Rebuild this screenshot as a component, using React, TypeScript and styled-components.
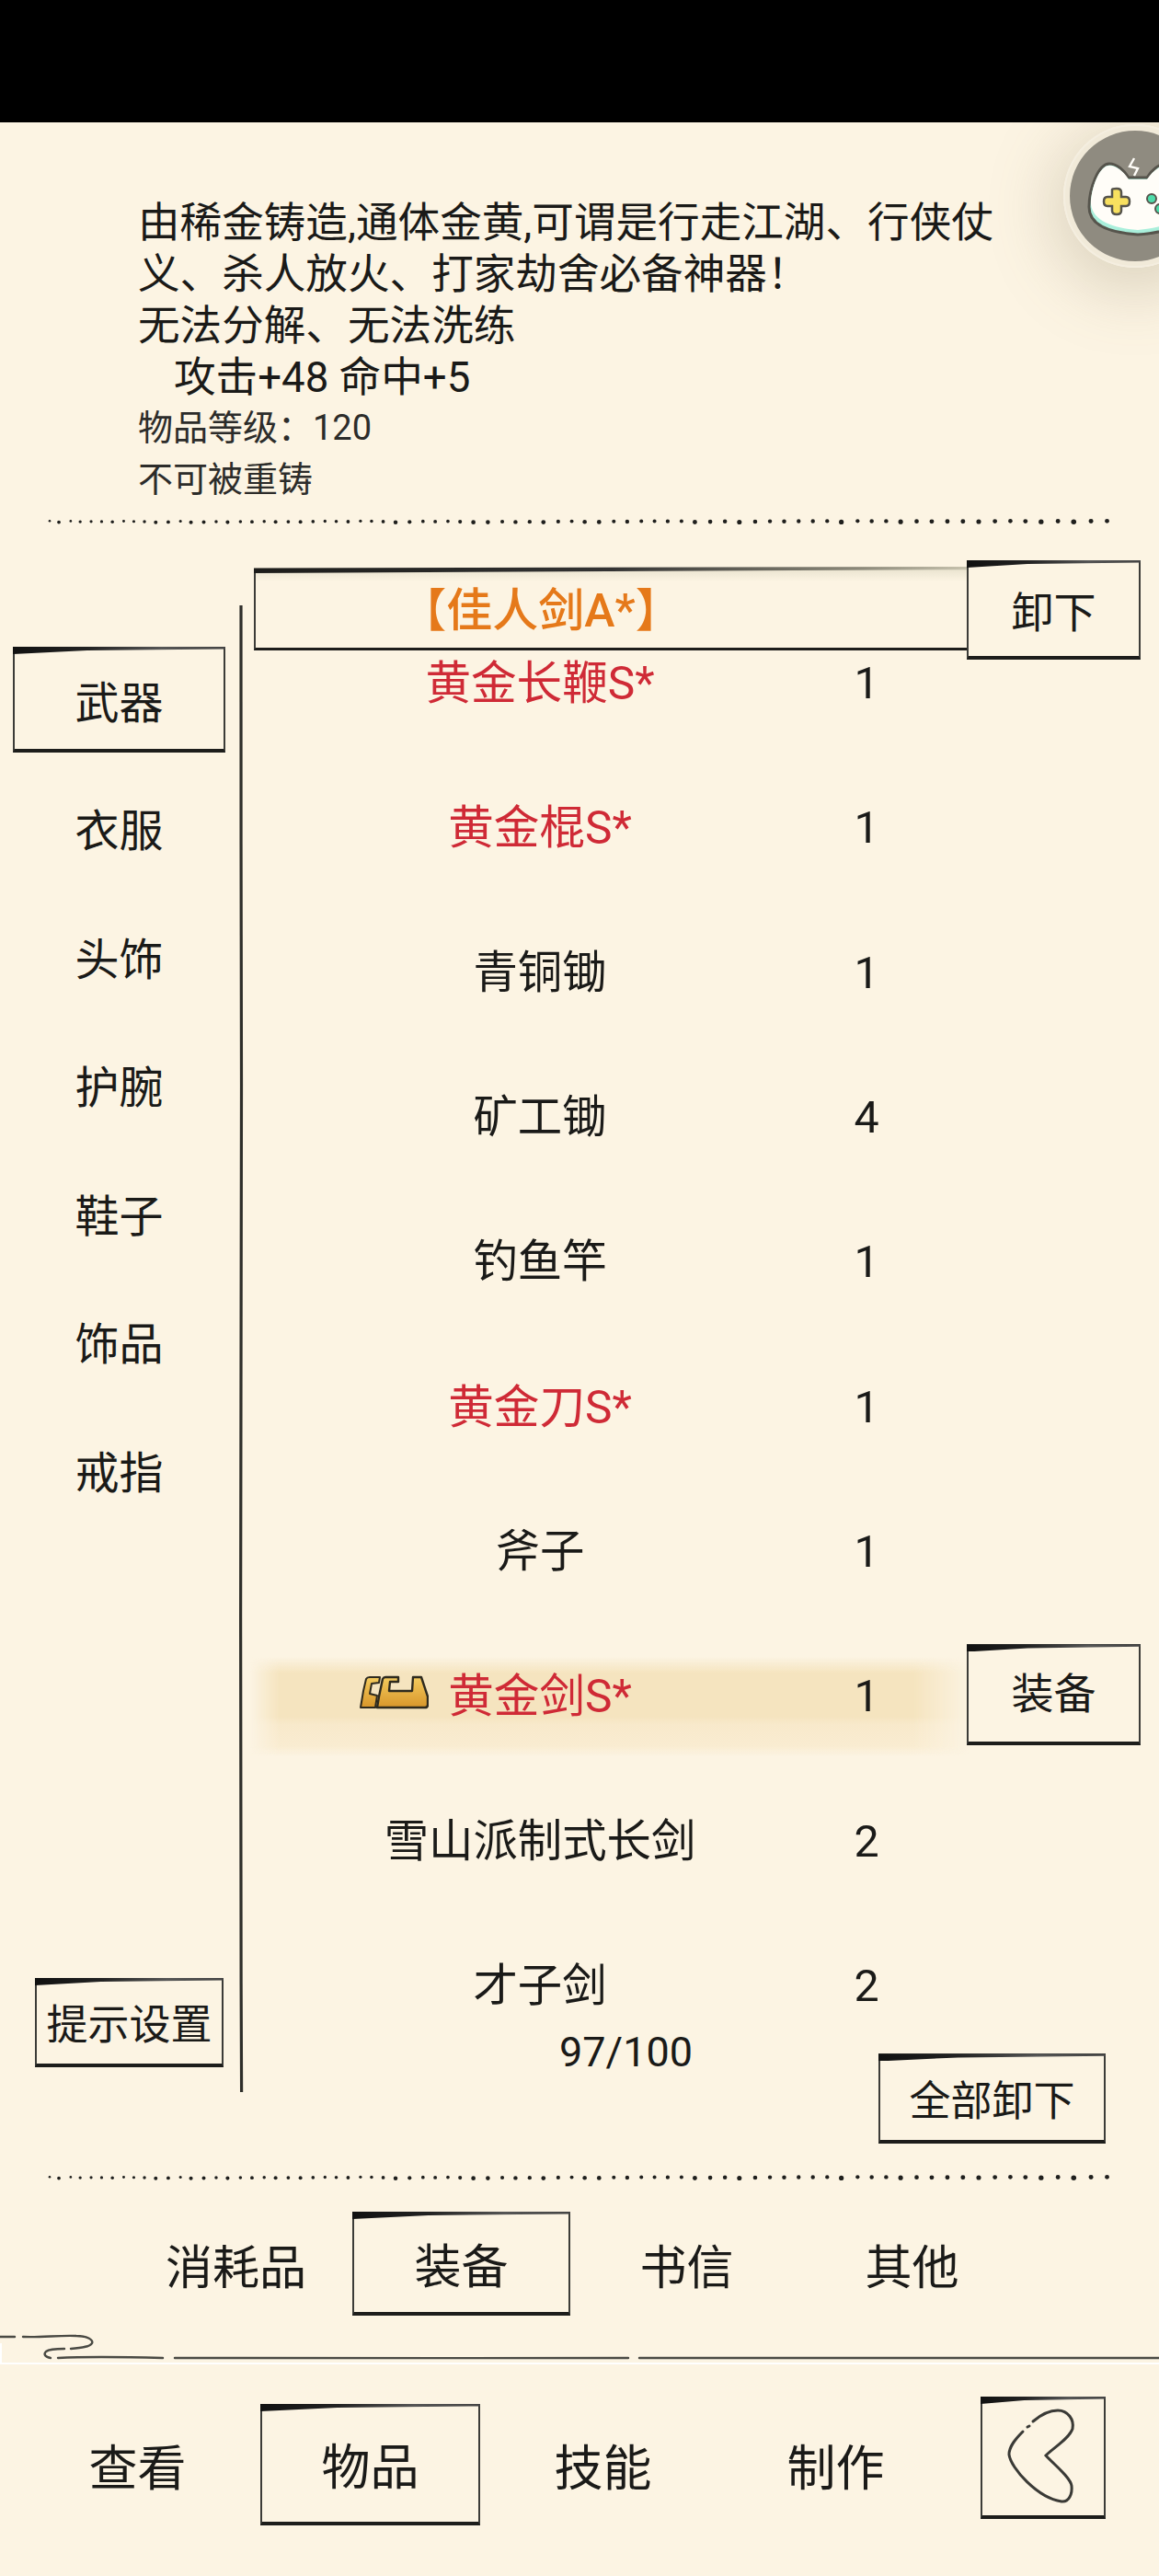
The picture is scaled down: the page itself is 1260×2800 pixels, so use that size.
import React from "react";
import styled, { createGlobalStyle } from "styled-components";

const PAPER = "#fcf4e3";
const INK = "#1a1a18";

const GlobalStyle = createGlobalStyle`
  html, body {
    margin: 0;
    padding: 0;
    background: ${PAPER};
  }
  * {
    box-sizing: border-box;
  }
`;

const Page = styled.div`
  position: relative;
  width: 1260px;
  height: 2800px;
  overflow: hidden;
  background: ${PAPER};
  color: ${INK};
  font-family: Roboto, "Noto Sans CJK SC", sans-serif;
`;

const StatusBar = styled.div`
  position: relative;
  z-index: 3;
  height: 133px;
  background: #000;
`;

const Description = styled.div`
  padding: 82px 0 0 150px;
  height: 415px;
`;

const DescLine = styled.div<{ $indent?: boolean }>`
  font-size: 45.6px;
  line-height: 56px;
  padding-left: ${(p) => (p.$indent ? "39px" : "0")};
  white-space: nowrap;
`;

const DescNote = styled.div`
  position: relative;
  top: -2px;
  font-size: 38px;
  line-height: 56px;
  color: #2c2c2a;
  white-space: nowrap;
`;

const DotRow = styled.svg<{ $top: number; $bottom: number }>`
  display: block;
  width: 1156px;
  height: 10px;
  margin: ${(p) => p.$top}px 0 ${(p) => p.$bottom}px 52px;
`;

const Main = styled.div`
  display: flex;
  height: 1740px;
`;

const Sidebar = styled.div`
  display: flex;
  flex-direction: column;
  gap: 24.6px;
  width: 259px;
  padding: 103px 0 93px 14px;
`;

const SketchBox = styled.div`
  position: relative;
  display: flex;
  align-items: center;
  justify-content: center;
  border-style: solid;
  border-color: #3c3c38;
  border-width: 2px 2px 4px 2px;
  border-bottom-color: #1d1d1b;
  white-space: nowrap;

  &::before {
    content: "";
    position: absolute;
    top: -2px;
    left: -2px;
    right: -2px;
    height: 8px;
    background: linear-gradient(90deg, #111 0%, #222 35%, #555 70%, #444 100%);
    clip-path: polygon(0 0, 100% 0, 100% 30%, 35% 50%, 0 100%);
  }
`;

const SideItem = styled.div`
  display: flex;
  align-items: center;
  justify-content: center;
  width: 231px;
  height: 115px;
  padding-bottom: 2px;
  font-size: 48px;
  flex: none;
`;

const SideActive = styled(SketchBox)`
  width: 231px;
  height: 115px;
  font-size: 48px;
  flex: none;
`;

const HintButton = styled(SketchBox)`
  width: 205px;
  height: 97px;
  margin: auto 0 0 24px;
  font-size: 45px;
  flex: none;
`;

const HandLine = styled.svg`
  flex: none;
  width: 6px;
  height: 1616px;
  margin: 58px 11px 0 0;
`;

const ListColumn = styled.div`
  width: 964px;
`;

const EquippedRow = styled.div`
  display: flex;
  align-items: flex-start;
  height: 110px;
`;

const EquippedBox = styled.div`
  position: relative;
  z-index: 1;
  width: 777px;
  height: 89px;
  margin-top: 18px;
  border-left: 2px solid #3c3c38;
  border-bottom: 3px solid #1d1d1b;
  background: linear-gradient(180deg, #e9e3cf 0, ${PAPER} 14px);

  &::before {
    content: "";
    position: absolute;
    top: -2px;
    left: -2px;
    right: 0;
    height: 7px;
    background: linear-gradient(90deg, #1c1c1a 0%, #333 50%, #8c897a 85%, #c8c3ae 100%);
    clip-path: polygon(0 20%, 100% 0, 100% 45%, 0 100%);
  }
`;

const EquippedName = styled.div`
  width: 620px;
  text-align: center;
  color: #e5791a;
  font-size: 50px;
  font-weight: 500;
  line-height: 92px;
  white-space: nowrap;
`;

const SmallAction = styled(SketchBox)`
  position: relative;
  z-index: 2;
  width: 189px;
  height: 108px;
  margin: 9px 0 0 -1px;
  background: ${PAPER};
  font-size: 46px;
  flex: none;
`;

const Row = styled.div<{ $selected?: boolean }>`
  position: relative;
  display: grid;
  grid-template-columns: 622px 88px 1fr;
  height: 157.35px;
  font-size: 48.4px;
  line-height: 66px;
  text-align: center;

  ${(p) =>
    p.$selected &&
    `
    &::before {
      content: "";
      position: absolute;
      top: -10px;
      left: -4px;
      width: 784px;
      height: 108px;
      background: linear-gradient(180deg, rgba(245,229,193,0) 0, #f5e4bf 16%, #f5e4bf 60%, #f8e9cb 68%, #f9ecd1 90%, rgba(250,238,214,0) 100%);
      -webkit-mask-image: linear-gradient(90deg, transparent 0, #000 4%, #000 92%, transparent 100%);
      mask-image: linear-gradient(90deg, transparent 0, #000 4%, #000 92%, transparent 100%);
    }
  `}
`;

const NameCell = styled.div`
  position: relative;
  white-space: nowrap;
`;

const ItemName = styled.span<{ $tone?: "red" | "plain" }>`
  position: relative;
  color: ${(p) => (p.$tone === "red" ? "#cf2a36" : INK)};
  font-size: ${(p) => (p.$tone === "red" ? "49.6px" : "inherit")};
`;

const LockIcon = styled.svg`
  position: absolute;
  left: -96px;
  top: 6px;
  width: 75px;
  height: 37px;
`;

const CountCell = styled.div`
  position: relative;
`;

const RowAction = styled(SketchBox)`
  justify-self: end;
  width: 189px;
  height: 110px;
  margin-top: -24px;
  background: ${PAPER};
  font-size: 46px;
`;

const ListFooter = styled.div`
  display: grid;
  grid-template-columns: 1fr auto;
  align-items: start;
  margin-top: -92px;
`;

const Capacity = styled.div`
  padding: 13px 0 0 130px;
  font-size: 45px;
  line-height: 54px;
  text-align: center;
`;

const ClearButton = styled(SketchBox)`
  width: 247px;
  height: 98px;
  margin: 41px 38px 0 0;
  font-size: 45px;
`;

const SubTabs = styled.div`
  display: grid;
  grid-template-columns: repeat(4, 245px);
  justify-items: center;
  align-items: center;
  height: 113px;
  margin-top: 32px;
  padding-left: 134px;
`;

const SubTab = styled.div`
  font-size: 51px;
`;

const SubTabActive = styled(SketchBox)`
  width: 237px;
  height: 113px;
  font-size: 51px;
`;

const CurlLine = styled.svg`
  display: block;
  width: 1260px;
  height: 35px;
  margin-top: 18px;
`;

const BottomTabs = styled.div`
  display: grid;
  grid-template-columns: repeat(4, 253px) 136px;
  justify-items: center;
  align-items: center;
  height: 132px;
  margin-top: 43px;
  padding-left: 23px;
`;

const BottomTab = styled.div`
  font-size: 53px;
`;

const BottomTabActive = styled(SketchBox)`
  width: 239px;
  height: 132px;
  font-size: 53px;
`;

const BackButton = styled(SketchBox)`
  align-self: start;
  justify-self: start;
  width: 136px;
  height: 133px;
  margin: -8px 0 0 31px;
`;

const FloatBall = styled.svg`
  position: absolute;
  z-index: 2;
  top: 133px;
  left: 1156px;
  width: 160px;
  height: 160px;
`;

const BallGlow = styled.div`
  position: absolute;
  z-index: 1;
  top: 135px;
  left: 1156px;
  width: 156px;
  height: 156px;
  border-radius: 50%;
  box-shadow: 0 14px 70px 12px rgba(130, 120, 90, 0.26);
`;

type Item = { name: string; count: number; rare?: boolean; selected?: boolean };

const ITEMS: Item[] = [
  { name: "黄金长鞭S*", count: 1, rare: true },
  { name: "黄金棍S*", count: 1, rare: true },
  { name: "青铜锄", count: 1 },
  { name: "矿工锄", count: 4 },
  { name: "钓鱼竿", count: 1 },
  { name: "黄金刀S*", count: 1, rare: true },
  { name: "斧子", count: 1 },
  { name: "黄金剑S*", count: 1, rare: true, selected: true },
  { name: "雪山派制式长剑", count: 2 },
  { name: "才子剑", count: 2 },
];

const SIDE_ITEMS = ["衣服", "头饰", "护腕", "鞋子", "饰品", "戒指"];

// hand-drawn dots: small and close on the left, heavier on the right
const DOTS = (() => {
  const out: { x: number; y: number; r: number }[] = [];
  let x = 2;
  let i = 0;
  while (x < 1154) {
    const t = x / 1156;
    const wobble = Math.sin(i * 12.9898) * 43758.5453;
    const rnd = wobble - Math.floor(wobble);
    out.push({ x, y: 5 + (rnd - 0.5) * 1.4, r: 1.3 + t * 1.1 + rnd * 0.6 });
    x += 10 + t * 7 + rnd * 3;
    i += 1;
  }
  return out;
})();

function DottedDivider({ top, bottom }: { top: number; bottom: number }) {
  return (
    <DotRow $top={top} $bottom={bottom} viewBox="0 0 1156 10">
      {DOTS.map((d) => (
        <circle key={d.x} cx={d.x} cy={d.y} r={d.r} fill="#1f1f1d" />
      ))}
    </DotRow>
  );
}

function GoldLock() {
  return (
    <LockIcon viewBox="0 0 75 37">
      <defs>
        <linearGradient id="gold" x1="0" y1="0" x2="0" y2="1">
          <stop offset="0" stopColor="#f4cb5e" />
          <stop offset="1" stopColor="#d8962a" />
        </linearGradient>
      </defs>
      <path
        d="M1 35 L4 17 L7 4 Q8 2 11 2 L22 2 L21 8 L13 9 L11 20 L19 22 L17 35 Z"
        fill="url(#gold)"
        stroke="#2e2a1e"
        strokeWidth="2"
        strokeLinejoin="round"
      />
      <path
        d="M19 35 L21 23 L25 4 Q26 2 28 2 L42 2 L42 7 L33 7 L32 17 L57 17 L58 2 L67 2 L74 23 L74 32 Q74 35 71 35 Z"
        fill="url(#gold)"
        stroke="#2e2a1e"
        strokeWidth="2.4"
        strokeLinejoin="round"
      />
    </LockIcon>
  );
}

function GameBall() {
  return (
    <FloatBall viewBox="1156 133 160 160">
      <circle cx="1234" cy="213" r="77" fill="#f1ead9" stroke="#f4eee0" strokeWidth="2" />
      <circle cx="1234" cy="213" r="71" fill="#8f8b80" />
      <path
        d="M1227 193 C1222 185 1214 178 1206 178 C1194 178 1184 205 1184 225 C1184 245 1206 253 1237 255 C1268 253 1290 245 1290 225 C1290 205 1280 178 1268 178 C1260 178 1252 185 1247 193 Z"
        fill="#a9efdb"
        stroke="#56544c"
        strokeWidth="3"
        strokeLinejoin="round"
      />
      <path
        d="M1227 195 C1222 187 1214 180 1206 180 C1195 180 1186 205 1186 222 C1188 240 1210 248 1237 250 C1264 248 1286 240 1288 222 C1288 205 1279 180 1268 180 C1260 180 1252 187 1247 195 Z"
        fill="#fffdf8"
      />
      <path
        d="M1209 206 Q1209 205 1214 205 Q1219 205 1219 209 L1219 214 L1224 214 Q1228 214 1228 219 Q1228 224 1224 224 L1219 224 L1219 229 Q1219 233 1214 233 Q1209 233 1209 229 L1209 224 L1204 224 Q1200 224 1200 219 Q1200 214 1204 214 L1209 214 Z"
        fill="#f8e05f"
        stroke="#56544c"
        strokeWidth="2.5"
      />
      <circle cx="1252" cy="216" r="5" fill="#4fdcaa" stroke="#56544c" strokeWidth="2" />
      <circle cx="1261" cy="227" r="5" fill="#4fdcaa" stroke="#56544c" strokeWidth="2" />
      <path d="M1233 172 L1228 181 L1237 183 L1233 191" fill="none" stroke="#fffdf8" strokeWidth="2.4" />
    </FloatBall>
  );
}

export default function App() {
  return (
    <Page>
      <GlobalStyle />
      <StatusBar />
      <BallGlow />
      <GameBall />

      <Description>
        <DescLine>由稀金铸造,通体金黄,可谓是行走江湖、行侠仗</DescLine>
        <DescLine>义、杀人放火、打家劫舍必备神器！</DescLine>
        <DescLine>无法分解、无法洗练</DescLine>
        <DescLine $indent>攻击+48 命中+5</DescLine>
        <DescNote>物品等级：120</DescNote>
        <DescNote>不可被重铸</DescNote>
      </Description>

      <DottedDivider top={14} bottom={28} />

      <Main>
        <Sidebar>
          <SideActive>武器</SideActive>
          {SIDE_ITEMS.map((label) => (
            <SideItem key={label}>{label}</SideItem>
          ))}
          <HintButton>提示设置</HintButton>
        </Sidebar>

        <HandLine viewBox="0 0 6 1616" preserveAspectRatio="none">
          <path
            d="M3 0 C4 200 2 320 3.5 520 C4.5 700 3 900 2.6 1100 C2 1300 3 1450 3.6 1616"
            fill="none"
            stroke="#2e2e2a"
            strokeWidth="3.2"
          />
        </HandLine>

        <ListColumn>
          <EquippedRow>
            <EquippedBox>
              <EquippedName>【佳人剑A*】</EquippedName>
            </EquippedBox>
            <SmallAction>卸下</SmallAction>
          </EquippedRow>

          {ITEMS.map((item) => (
            <Row key={item.name} $selected={item.selected}>
              <NameCell>
                <ItemName $tone={item.rare ? "red" : "plain"}>
                  {item.selected && <GoldLock />}
                  {item.name}
                </ItemName>
              </NameCell>
              <CountCell>{item.count}</CountCell>
              {item.selected && <RowAction>装备</RowAction>}
            </Row>
          ))}

          <ListFooter>
            <Capacity>97/100</Capacity>
            <ClearButton>全部卸下</ClearButton>
          </ListFooter>
        </ListColumn>
      </Main>

      <DottedDivider top={22} bottom={0} />

      <SubTabs>
        <SubTab>消耗品</SubTab>
        <SubTabActive>装备</SubTabActive>
        <SubTab>书信</SubTab>
        <SubTab>其他</SubTab>
      </SubTabs>

      <CurlLine viewBox="0 0 1260 35">
        <rect x="0" y="33" width="1260" height="2" fill="#ffffff" />
        <rect x="0" y="12" width="2" height="22" fill="#ffffff" />
        <g fill="none" stroke="#4a4a44" strokeWidth="2.4" strokeLinecap="round">
          <path d="M0 5 L16 5" />
          <path d="M25 5 C45 6 65 3 83 4 C94 4 102 8 100 12 C98 16 88 17 77 18" />
          <path d="M70 18 C62 18 54 18 50 21 C47 24 49 27 55 28" />
          <path d="M63 28 C100 26 140 27 177 28" />
          <path d="M190 28 C350 27 520 29 683 28" />
          <path d="M695 28 C850 27 1050 29 1260 28" />
        </g>
      </CurlLine>

      <BottomTabs>
        <BottomTab>查看</BottomTab>
        <BottomTabActive>物品</BottomTabActive>
        <BottomTab>技能</BottomTab>
        <BottomTab>制作</BottomTab>
        <BackButton>
          <svg width="132" height="127" viewBox="2 2 132 127">
            <g fill="none" stroke="#3a3a36" strokeWidth="3" strokeLinecap="round">
              <path d="M46 38 C38 46 31 54 31 63 C33 78 62 110 88 114 C96 115 100 106 99 97 C98 88 80 74 71 64 C80 55 96 46 100 35 C102 25 95 15 84 15 C74 15 64 21 57 27" />
              <path d="M51 33 L53 32" />
            </g>
          </svg>
        </BackButton>
      </BottomTabs>
    </Page>
  );
}
